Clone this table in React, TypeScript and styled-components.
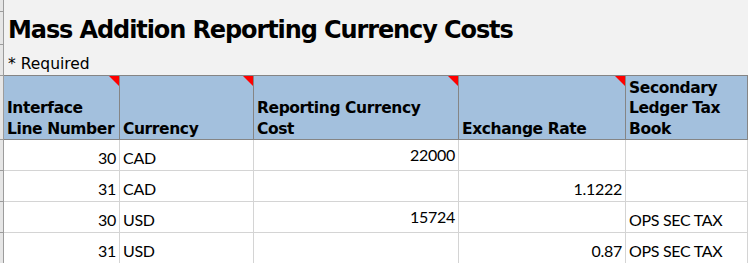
import React from "react";
import styled, { createGlobalStyle } from "styled-components";

const GlobalStyle = createGlobalStyle`
	html, body {
		margin: 0;
		padding: 0;
		background: #f2f2f2;
	}
	body {
		font-family: "DejaVu Sans", "Liberation Sans", sans-serif;
		color: #000000;
	}
`;

const cols = [115, 133, 204, 166];

const Sheet = styled.div`
	width: 748px;
	height: 263px;
	overflow: hidden;
	display: flex;
	flex-direction: column;
	background: #f2f2f2;
`;

const Row = styled.div<{ $h: number }>`
	display: flex;
	height: ${(p) => p.$h}px;
	flex-shrink: 0;
`;

const RowHead = styled.div`
	width: 3px;
	flex-shrink: 0;
	background: #e6e6e6;
	border-right: 1px solid #9c9c9c;
	border-bottom: 1px solid #9c9c9c;
`;

const Band = styled.div<{ $line?: boolean }>`
	flex: 1;
	display: flex;
	align-items: flex-end;
	padding-left: 4px;
	border-bottom: 1px solid ${(p) => (p.$line ? "#858585" : "transparent")};
`;

const Title = styled.div`
	font-size: 24px;
	font-weight: bold;
	line-height: 28px;
	letter-spacing: -1.1px;
	padding-bottom: 0;
`;

const Required = styled.div`
	font-size: 15.5px;
	line-height: 20px;
	padding-bottom: 1px;
`;

const HeadCell = styled.div<{ $w?: number; $flag?: boolean }>`
	position: relative;
	width: ${(p) => (p.$w ? `${p.$w}px` : "auto")};
	flex: ${(p) => (p.$w ? "0 0 auto" : "1")};
	background: #a3c0dd;
	border-right: 1px solid #858585;
	border-bottom: 1px solid #858585;
	display: flex;
	align-items: flex-end;
	padding: 0 3px 0 3px;
	box-sizing: content-box;
	font-size: 15.5px;
	font-weight: bold;
	line-height: 20.5px;
	letter-spacing: -0.4px;
	white-space: pre-line;
	&::after {
		content: "";
		display: ${(p) => (p.$flag ? "block" : "none")};
		position: absolute;
		top: 0;
		right: 0;
		border-style: solid;
		border-width: 0 10px 10px 0;
		border-color: transparent #ff0000 transparent transparent;
	}
`;

const Cell = styled.div<{ $w?: number; $right?: boolean; $mid?: boolean }>`
	width: ${(p) => (p.$w ? `${p.$w}px` : "auto")};
	flex: ${(p) => (p.$w ? "0 0 auto" : "1")};
	background: #ffffff;
	border-right: 1px solid #d4d4d4;
	border-bottom: 1px solid #d4d4d4;
	display: flex;
	align-items: ${(p) => (p.$mid ? "center" : "flex-end")};
	justify-content: ${(p) => (p.$right ? "flex-end" : "flex-start")};
	padding: ${(p) => (p.$mid ? "0 3px 1px 3px" : "0 3px 2px 3px")};
	box-sizing: content-box;
	font-family: Lato, "Open Sans", sans-serif;
	font-size: 16px;
	line-height: 20px;
	letter-spacing: -0.3px;
	white-space: nowrap;
`;

const headers = [
	{ label: "Interface\nLine Number", flag: true },
	{ label: "Currency", flag: true },
	{ label: "Reporting Currency\nCost", flag: true },
	{ label: "Exchange Rate", flag: true },
	{ label: "Secondary\nLedger Tax\nBook", flag: false },
];

const rows = [
	["30", "CAD", "22000", "", ""],
	["31", "CAD", "", "1.1222", ""],
	["30", "USD", "15724", "", "OPS SEC TAX"],
	["31", "USD", "", "0.87", "OPS SEC TAX"],
];

export default function App() {
	return (
		<>
			<GlobalStyle />
			<Sheet>
				<Row $h={12}>
					<RowHead />
					<Band />
				</Row>
				<Row $h={33}>
					<RowHead />
					<Band>
						<Title>Mass Addition Reporting Currency Costs</Title>
					</Band>
				</Row>
				<Row $h={31}>
					<RowHead />
					<Band $line>
						<Required>* Required</Required>
					</Band>
				</Row>
				<Row $h={64}>
					<RowHead />
					{headers.map((h, i) => (
						<HeadCell key={i} $w={cols[i] ? cols[i] - 6 : undefined} $flag={h.flag}>
							{h.label}
						</HeadCell>
					))}
				</Row>
				{rows.map((r, ri) => (
					<Row $h={31} key={ri}>
						<RowHead />
						{r.map((v, ci) => (
							<Cell
								key={ci}
								$w={cols[ci] ? cols[ci] - 6 : undefined}
								$right={ci === 0 || ci === 2 || ci === 3}
								$mid={ci === 2}
							>
								{v}
							</Cell>
						))}
					</Row>
				))}
			</Sheet>
		</>
	);
}
